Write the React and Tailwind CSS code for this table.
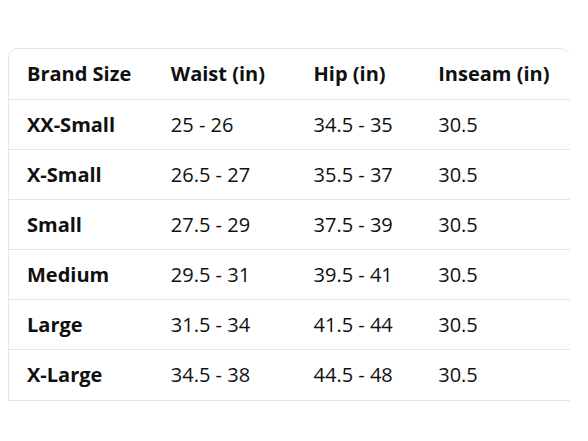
const rows = [
  ["XX-Small", "25 - 26", "34.5 - 35", "30.5"],
  ["X-Small", "26.5 - 27", "35.5 - 37", "30.5"],
  ["Small", "27.5 - 29", "37.5 - 39", "30.5"],
  ["Medium", "29.5 - 31", "39.5 - 41", "30.5"],
  ["Large", "31.5 - 34", "41.5 - 44", "30.5"],
  ["X-Large", "34.5 - 38", "44.5 - 48", "30.5"],
];

const widths = ["w-[144px]", "w-[143px]", "w-[125px]", "w-[150px]"];

export default function App() {
  return (
    <div className="w-[588px] h-[441px] bg-white pt-[48px] pl-[8px] font-['Open_Sans',sans-serif] text-[#0f1111]">
      <div className="w-[562px] border border-r-0 border-[#e3e6e6] rounded-tl-[10px] rounded-tr-[10px] overflow-hidden">
        <table className="table-fixed border-separate border-spacing-0 text-[20px]">
          <thead>
            <tr className="h-[51px]">
              {["Brand Size", "Waist (in)", "Hip (in)", "Inseam (in)"].map((h, i) => (
                <th
                  key={h}
                  className={`${widths[i]} pl-[18px] text-left font-bold border-b border-[#e3e6e6] align-middle`}
                >
                  {h}
                </th>
              ))}
            </tr>
          </thead>
          <tbody>
            {rows.map((r, ri) => (
              <tr key={r[0]} className="h-[50px]">
                {r.map((c, i) => (
                  <td
                    key={i}
                    className={`pl-[18px] align-middle ${i === 0 ? "font-bold" : ""} ${
                      ri < rows.length - 1 ? "border-b border-[#e3e6e6]" : ""
                    }`}
                  >
                    {c}
                  </td>
                ))}
              </tr>
            ))}
          </tbody>
        </table>
      </div>
    </div>
  );
}
